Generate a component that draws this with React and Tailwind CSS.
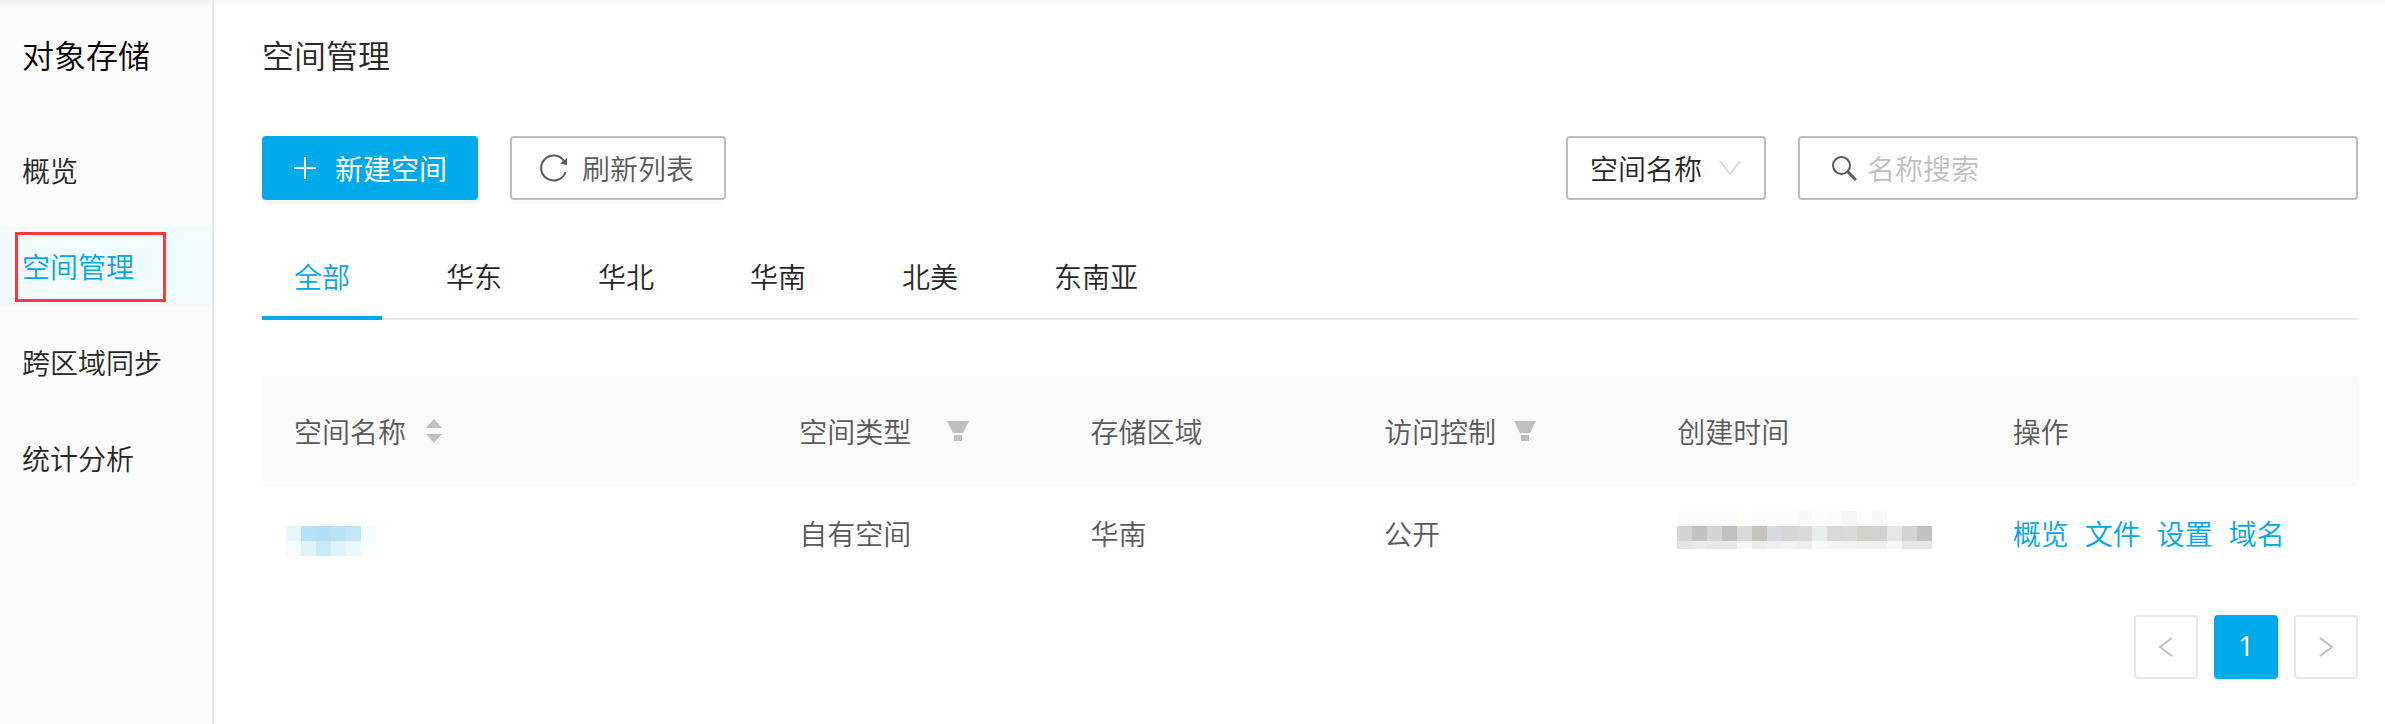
import { useState } from "react";

const MENU = ["概览", "空间管理", "跨区域同步", "统计分析"];
const REGIONS = ["全部", "华东", "华北", "华南", "北美", "东南亚"];
const ACTIONS = ["概览", "文件", "设置", "域名"];

const NAME_MASK = [
  ["#ffffff", "#ffffff", "#fefefe", "#fefefe", "#ffffff", "#ffffff"],
  ["#e8f5fc", "#b4e1f5", "#b2dff4", "#b9e3f5", "#c0e6f8", "#f2fcfe"],
  ["#f5fbfe", "#dff3fb", "#caeaf8", "#dff1fb", "#e9f7fc", "#fafeff"],
];

const TIME_MASK = [
  ["#fbfbfb", "#fbfbfb", "#fbfbfb", "#fbfbfb", "#fefdfa", "#fafdfc", "#fafdfc", "#fcfcfb", "#f8f8f8", "#fafdfc", "#fbfbfb", "#f5f5f5", "#fdfdfb", "#f8f8f8", "#ffffff", "#ffffff", "#ffffff"],
  ["#d3d4d6", "#c2c2c2", "#d4d4d4", "#c1c1c1", "#d9d9d9", "#c5c3c0", "#d8dade", "#d6d6d6", "#dcdad8", "#e9ecea", "#d9d9d9", "#dadad8", "#d4d0ca", "#d1d2d6", "#e4e6e5", "#d3d3d3", "#c2c2c4"],
  ["#e3e5e5", "#ebebea", "#e7e8e8", "#e8e8e8", "#f5f6f6", "#edecea", "#eef0f3", "#f3f3f3", "#f0eeed", "#f8f9f9", "#f5f5f5", "#f2f3f3", "#f3f2f0", "#edeff3", "#f5f6f6", "#e6e7e9", "#e6e6e6"],
];

function Mosaic({ rows, lastRow }) {
  return (
    <div className="flex h-[45px] flex-col" aria-hidden="true">
      {rows.map((row, i) => (
        <div key={i} className={`flex ${i === rows.length - 1 ? lastRow : "h-[15px]"}`}>
          {row.map((color, j) => (
            <span key={j} className="w-[15px]" style={{ backgroundColor: color }} />
          ))}
        </div>
      ))}
    </div>
  );
}

function FilterIcon() {
  return (
    <svg width="22" height="20" viewBox="0 0 22 20" fill="#bfbfbf" aria-hidden="true">
      <path d="M0 0H22L16 12H6Z" />
      <path d="M7 14H15V20H7Z" />
    </svg>
  );
}

function SortIcon() {
  return (
    <svg width="16" height="24" viewBox="0 0 16 24" fill="#bfbfbf" aria-hidden="true">
      <path d="M8 0L16 9H0Z" />
      <path d="M8 24L16 15H0Z" />
    </svg>
  );
}

function App() {
  const [menu, setMenu] = useState("空间管理");
  const [region, setRegion] = useState("全部");
  const [keyword, setKeyword] = useState("");

  return (
    <div className="flex min-h-screen bg-white bg-linear-to-b from-[#f5f5f5] to-white to-[10px] font-['Noto_Sans_CJK_SC',sans-serif] text-[28px] leading-[42px] font-[350] text-[#262626]">
      <aside className="w-[214px] shrink-0 border-r-2 border-[#e8e8e8] bg-[#fcfcfc] bg-linear-to-b from-[#f3f3f3] to-[#fcfcfc] to-[10px] pt-[30px]">
        <h2 className="pl-[22px] text-[32px] leading-[48px] text-black">
          对象存储
        </h2>
        <nav className="mt-[52px] flex flex-col gap-4">
          {MENU.map((item) => (
            <a
              key={item}
              href="#"
              onClick={() => setMenu(item)}
              className={`relative flex h-20 items-center pl-[22px] ${
                item === menu ? "bg-[#f2fbff] text-[#00a7e7]" : ""
              }`}
            >
              {item}
              {item === menu && (
                <span className="absolute top-[6px] left-[15px] h-[70px] w-[151px] border-3 border-[#ff3838]" />
              )}
            </a>
          ))}
        </nav>
      </aside>

      <main className="min-w-0 flex-1 pt-[30px] pr-[27px] pl-12">
        <h1 className="text-[32px] leading-[48px]">空间管理</h1>

        <div className="mt-[58px] flex items-center">
          <button className="flex h-16 w-[216px] items-center justify-center gap-[18px] rounded bg-[#00a9e9] font-normal text-white shadow-[0_4px_0_rgba(0,0,0,0.04)]">
            <svg width="24" height="24" viewBox="0 0 24 24" stroke="currentColor" strokeWidth="2" aria-hidden="true">
              <path d="M12 1V23M1 12H23" />
            </svg>
            新建空间
          </button>
          <button className="ml-8 flex h-16 w-[216px] items-center justify-center gap-[14px] rounded border-2 border-[#bfbfbf] pr-[2px] text-[#595959] shadow-[0_4px_0_rgba(0,0,0,0.015)]">
            <svg width="28" height="28" viewBox="0 0 28 28" fill="none" stroke="currentColor" strokeWidth="2" aria-hidden="true">
              <path d="M25.500 18A12.500 12.500 0 1 1 24 7" />
              <path d="M27 4V11L20 9.500Z" fill="currentColor" stroke="none" />
            </svg>
            刷新列表
          </button>

          <div className="relative ml-auto">
            <select
              aria-label="搜索字段"
              className="h-16 w-[200px] appearance-none rounded border-2 border-[#bfbfbf] bg-white pl-[22px]"
            >
              <option>空间名称</option>
            </select>
            <svg className="pointer-events-none absolute top-[24px] right-[25px]" width="22" height="16" viewBox="0 0 22 16" fill="none" stroke="#d9d9d9" strokeWidth="2" aria-hidden="true">
              <path d="M1 1L11 14L21 1" />
            </svg>
          </div>
          <label className="ml-8 flex h-16 w-[560px] items-center gap-[10px] rounded border-2 border-[#bfbfbf] pl-8">
            <svg width="25" height="25" viewBox="0 0 25 25" fill="none" stroke="#595959" strokeWidth="2" aria-hidden="true">
              <circle cx="9.500" cy="9.500" r="8.500" />
              <path d="M15.500 15.500L24 24" strokeWidth="3" />
            </svg>
            <input
              value={keyword}
              onChange={(event) => setKeyword(event.target.value)}
              placeholder="名称搜索"
              aria-label="名称搜索"
              className="min-w-0 flex-1 outline-none placeholder:text-[#bfbfbf]"
            />
          </label>
        </div>

        <div role="tablist" className="mt-8 flex gap-8 shadow-[inset_0_-2px_0_#e8e8e8]">
          {REGIONS.map((item) => (
            <button
              key={item}
              role="tab"
              aria-selected={item === region}
              onClick={() => setRegion(item)}
              className={`h-[88px] border-b-4 px-8 pt-1 ${
                item === region
                  ? "border-[#00a9e9] text-[#00a7e7]"
                  : "border-transparent"
              }`}
            >
              {item}
            </button>
          ))}
        </div>

        <table className="mt-14 w-full table-fixed text-left text-[#595959]">
          <colgroup>
            <col className="w-[24.1%]" />
            <col className="w-[13.9%]" />
            <col className="w-[14%]" />
            <col className="w-[14%]" />
            <col className="w-[16%]" />
            <col className="w-[18%]" />
          </colgroup>
          <thead>
            <tr className="h-[110px] bg-[#fafafa] [&>th]:px-8 [&>th]:font-[350]">
              <th className="rounded-tl">
                <div className="flex items-center gap-5">
                  空间名称
                  <SortIcon />
                </div>
              </th>
              <th>
                <div className="flex items-center gap-9">
                  空间类型
                  <FilterIcon />
                </div>
              </th>
              <th>存储区域</th>
              <th>
                <div className="flex items-center gap-[18px]">
                  访问控制
                  <FilterIcon />
                </div>
              </th>
              <th>创建时间</th>
              <th className="rounded-tr">操作</th>
            </tr>
          </thead>
          <tbody>
            <tr className="h-[94px] [&>td]:px-8">
              <td>
                <div className="-ml-2">
                  <Mosaic rows={NAME_MASK} lastRow="h-[15px]" />
                </div>
              </td>
              <td>自有空间</td>
              <td>华南</td>
              <td>公开</td>
              <td>
                <Mosaic rows={TIME_MASK} lastRow="h-2" />
              </td>
              <td>
                <div className="flex gap-4 text-[#00a7e7]">
                  {ACTIONS.map((item) => (
                    <a key={item} href="#">
                      {item}
                    </a>
                  ))}
                </div>
              </td>
            </tr>
          </tbody>
        </table>

        <div className="mt-[35px] flex justify-end gap-4">
          <button aria-label="上一页" className="flex size-16 items-center justify-center rounded border-2 border-[#e8e8e8]">
            <svg width="14" height="20" viewBox="0 0 14 20" fill="none" stroke="#bfbfbf" strokeWidth="2" aria-hidden="true">
              <path d="M13 1L1 10L13 19" />
            </svg>
          </button>
          <button className="size-16 rounded bg-[#00a9e9] pb-1 font-['Open_Sans',sans-serif] font-normal text-white">
            1
          </button>
          <button aria-label="下一页" className="flex size-16 items-center justify-center rounded border-2 border-[#e8e8e8]">
            <svg width="14" height="20" viewBox="0 0 14 20" fill="none" stroke="#bfbfbf" strokeWidth="2" aria-hidden="true">
              <path d="M1 1L13 10L1 19" />
            </svg>
          </button>
        </div>
      </main>
    </div>
  );
}

export default App;
